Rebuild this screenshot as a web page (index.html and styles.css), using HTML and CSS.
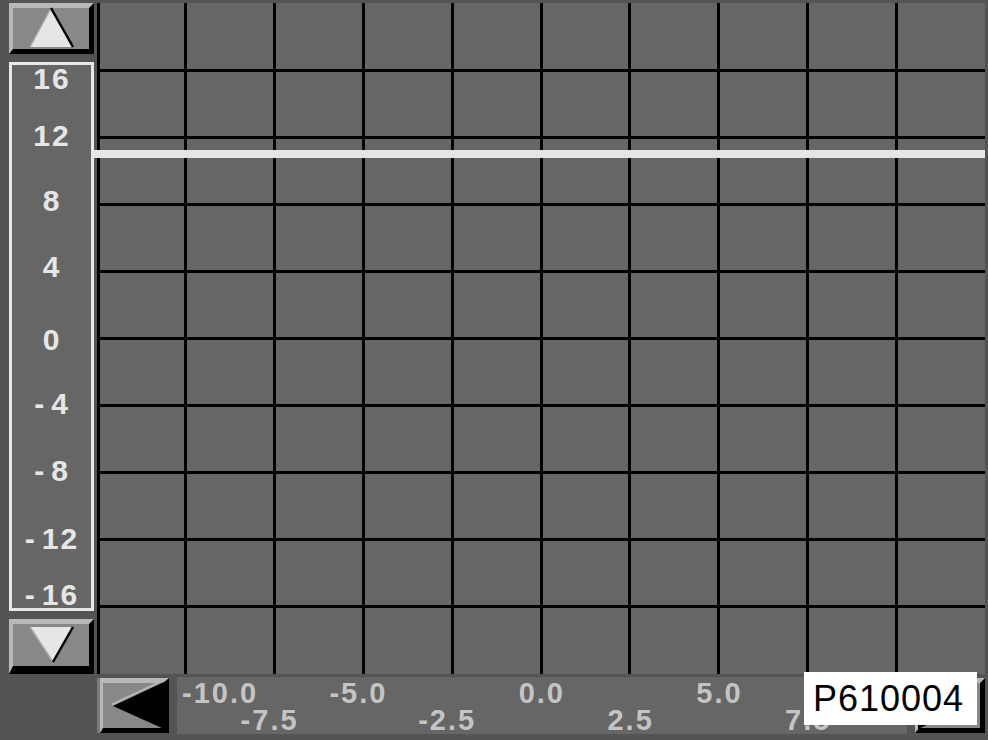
FILE: index.html
```html
<!DOCTYPE html>
<html>
<head>
<meta charset="utf-8">
<title>Chart</title>
<link rel="stylesheet" href="styles.css">
</head>
<body>
<div class="screen">
  <div class="top">
    <div class="yaxis">
      <div class="btn btn-up">
        <svg class="arrow" width="76" height="41" viewBox="0 0 76 41">
          <polygon points="38,0 60,39 17,39" fill="#e6e6e6"/>
          <line x1="17" y1="39" x2="38" y2="0" stroke="#a8a8a8" stroke-width="1.5"/>
          <line x1="38" y1="0" x2="60" y2="39" stroke="#000" stroke-width="2.5"/>
        </svg>
      </div>
      <div class="ylabels">
        <span class="yl">16</span>
        <span class="yl">12</span>
        <span class="yl">8</span>
        <span class="yl">4</span>
        <span class="yl">0</span>
        <span class="yl"><span class="sign">-</span>4</span>
        <span class="yl"><span class="sign">-</span>8</span>
        <span class="yl"><span class="sign">-</span>12</span>
        <span class="yl"><span class="sign">-</span>16</span>
      </div>
      <div class="btn btn-down">
        <svg class="arrow" width="76" height="42" viewBox="0 0 76 42">
          <polygon points="17,3 60,3 40,38" fill="#e6e6e6"/>
          <line x1="17" y1="3" x2="40" y2="38" stroke="#a8a8a8" stroke-width="1.5"/>
          <line x1="60" y1="3" x2="40" y2="38" stroke="#000" stroke-width="2.5"/>
        </svg>
      </div>
    </div>
    <div class="plot">
      <svg class="grid" width="888" height="671" viewBox="0 0 888 671">
        <path d="M1.5 0V671M88.8 0V671M177.6 0V671M266.4 0V671M355.2 0V671M444 0V671M532.8 0V671M621.6 0V671M710.4 0V671M799.2 0V671" stroke="#000" stroke-width="3" fill="none"/>
        <path d="M0 67.1H888M0 134.2H888M0 201.3H888M0 268.4H888M0 335.5H888M0 402.6H888M0 469.7H888M0 536.8H888M0 603.9H888" stroke="#000" stroke-width="3" fill="none"/>
      </svg>
    </div>
    <div class="trace"></div>
  </div>
  <div class="bottom">
    <div class="btn btn-left">
      <svg class="arrow" width="60" height="45" viewBox="0 0 60 45">
        <polygon points="10,23 61,-1 61,46" fill="#000"/>
        <line x1="9" y1="21.5" x2="59" y2="-2" stroke="#b4b4b4" stroke-width="2"/>
      </svg>
    </div>
    <div class="xlabels">
      <span class="xl first">-10.0</span>
      <span class="xl c3">-5.0</span>
      <span class="xl c5">0.0</span>
      <span class="xl c7">5.0</span>
      <span class="xl row2 c2">-7.5</span>
      <span class="xl row2 c4">-2.5</span>
      <span class="xl row2 c6">2.5</span>
      <span class="xl row2 c8">7.5</span>
    </div>
    <div class="btn btn-right">
      <svg class="arrow" width="61" height="45" viewBox="0 0 61 45">
        <polygon points="50,23 -1,-1 -1,46" fill="#000"/>
      </svg>
    </div>
    <div class="tag">P610004</div>
  </div>
</div>
</body>
</html>
```

FILE: styles.css
```css
html, body {
  margin: 0;
  padding: 0;
}

body {
  width: 988px;
  height: 740px;
  overflow: hidden;
  background: #545454;
  font-family: "Liberation Sans", Arial, sans-serif;
}

.screen {
  padding: 3px 3px 0 9px;
}

.top {
  position: relative;
  display: flex;
  gap: 3px;
  height: 671px;
}

.yaxis {
  width: 85px;
  display: flex;
  flex-direction: column;
  flex: none;
}

.btn {
  box-sizing: border-box;
  background: #888888;
  border-style: solid;
  border-color: #b8b8b8 #000 #000 #b8b8b8;
  border-width: 5px 5px 5px 4px;
  display: flex;
  flex: none;
}

.arrow {
  display: block;
  overflow: visible;
}

.btn-up {
  height: 51px;
}

.btn-down {
  margin-top: 8px;
  height: 55px;
  border-bottom-width: 8px;
}

.ylabels {
  box-sizing: border-box;
  margin-top: 8px;
  height: 549px;
  border: 3px solid #e8e8e8;
  background: #666666;
  display: grid;
  grid-template-rows: 57px 65px 66px 73px 64px 67px 68px 56px 22px;
  align-content: start;
  padding-top: 3px;
}

.yl {
  display: block;
  text-align: center;
  color: #e6e6e6;
  font-weight: bold;
  font-size: 30px;
  line-height: 22px;
  letter-spacing: 2px;
  padding-left: 1px;
}

.sign {
  margin-right: 5px;
}

.plot {
  width: 888px;
  height: 671px;
  background: #666666;
  flex: none;
}

.grid {
  display: block;
  shape-rendering: crispEdges;
}

.trace {
  position: absolute;
  left: 83px;
  top: 147px;
  width: 893px;
  height: 8px;
  background: #e6e6e6;
}

.bottom {
  position: relative;
  display: flex;
  align-items: center;
  gap: 8px;
  padding-left: 88px;
  padding-top: 3px;
}

.btn-left {
  width: 69px;
  height: 55px;
  margin-left: 3px;
  border-left-width: 3px;
  border-right-width: 6px;
  box-shadow: -3px 0 0 #7a7a7a;
}

.btn-right {
  width: 70px;
  height: 55px;
  justify-content: flex-end;
}

.xlabels {
  box-sizing: border-box;
  width: 730px;
  height: 57px;
  background: #666666;
  display: grid;
  grid-template-columns: 32.8px repeat(7, 88.8px);
  grid-template-rows: 27px 22px;
  padding-top: 5px;
  flex: none;
}

.xl {
  grid-row: 1;
  justify-self: end;
  color: #c4c4c4;
  font-weight: bold;
  font-size: 29px;
  line-height: 22px;
  letter-spacing: 2px;
  white-space: nowrap;
}

.xl.row2 { grid-row: 2; }
.xl.first { grid-column: 1 / 3; justify-self: start; margin-left: 5px; }
.xl.c2 { grid-column: 1 / 3; }
.xl.c3 { grid-column: 2 / 4; }
.xl.c4 { grid-column: 3 / 5; }
.xl.c5 { grid-column: 4 / 6; }
.xl.c6 { grid-column: 5 / 7; }
.xl.c7 { grid-column: 6 / 8; }
.xl.c8 { grid-column: 7 / 9; }

.tag {
  position: absolute;
  left: 795px;
  top: -2px;
  box-sizing: border-box;
  width: 173px;
  height: 53px;
  padding-left: 9px;
  background: #ffffff;
  color: #000000;
  font-size: 36px;
  line-height: 53px;
  letter-spacing: 1px;
}
```
